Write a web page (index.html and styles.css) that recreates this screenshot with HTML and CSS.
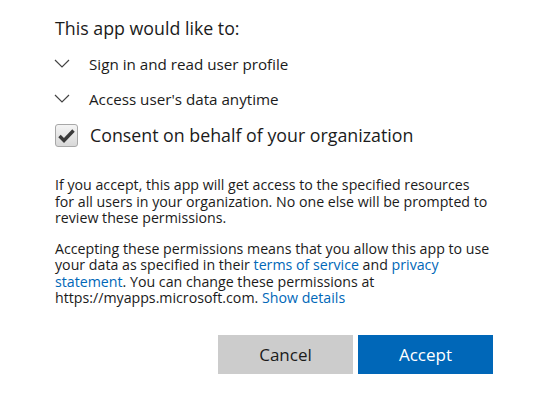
FILE: index.html
```html
<!DOCTYPE html>
<html lang="en">
<head>
  <meta charset="UTF-8" />
  <meta name="viewport" content="width=device-width, initial-scale=1.0"/>
  <title>Permissions requested</title>
  <link rel="stylesheet" href="styles.css">
</head>
<body>
  <div class="consent">
    <div class="title">This app would like to:</div>
    <ul class="scopes">
      <li class="scope">
        <svg class="chevron" width="16" height="9" viewBox="0 0 16 9"><polyline points="1,1 8,8 15,1" fill="none" stroke="#444" stroke-width="1.2"/></svg>
        <span>Sign in and read user profile</span>
      </li>
      <li class="scope">
        <svg class="chevron" width="16" height="9" viewBox="0 0 16 9"><polyline points="1,1 8,8 15,1" fill="none" stroke="#444" stroke-width="1.2"/></svg>
        <span>Access user's data anytime</span>
      </li>
    </ul>
    <label class="org-consent">
      <span class="checkbox">
        <svg width="17" height="15" viewBox="0 0 17 15"><path d="M1.5 8 L6 12.5 L15.5 2.5" fill="none" stroke="#3a3a3a" stroke-width="3.4" stroke-linejoin="miter"/></svg>
      </span>
      <span>Consent on behalf of your organization</span>
    </label>
    <p class="note">If you accept, this app will get access to the specified resources<br>for all users in your organization. No one else will be prompted to<br>review these permissions.</p>
    <p class="note">Accepting these permissions means that you allow this app to use<br>your data as specified in their <a href="#">terms of service</a> and <a href="#">privacy<br>statement</a>. You can change these permissions at<br>https://myapps.microsoft.com. <a href="#">Show details</a></p>
    <div class="buttons">
      <button class="btn cancel">Cancel</button>
      <button class="btn accept">Accept</button>
    </div>
  </div>
</body>
</html>
```

FILE: styles.css
```css
* {
  box-sizing: border-box;
}
body {
  margin: 0;
  background-color: #fff;
  font-family: "Open Sans", "Noto Sans", Arial, sans-serif;
  color: #1b1b1b;
}
.consent {
  width: 493px;
  padding: 16px 0 0 55px;
}
.title {
  font-size: 17.8px;
  line-height: 24px;
}
.scopes {
  list-style: none;
  margin: 6px 0 0;
  padding: 0;
}
.scope {
  display: flex;
  align-items: center;
  height: 35px;
  font-size: 15.2px;
}
.chevron {
  margin: 0 19px 0 -1px;
}
.org-consent {
  display: flex;
  align-items: center;
  margin-top: 7px;
  font-size: 17.8px;
}
.checkbox {
  width: 23px;
  height: 23px;
  margin-right: 12px;
  border: 1px solid #a8a8a8;
  border-radius: 3px;
  background: linear-gradient(#f4f4f4, #d8d8d8);
  display: flex;
  align-items: center;
  justify-content: center;
}
.note {
  margin: 30px -30px 0 0;
  font-size: 14.2px;
  line-height: 16.5px;
}
.note + .note {
  margin-top: 14px;
}
.note a {
  color: #0067b8;
  text-decoration: none;
}
.buttons {
  display: flex;
  justify-content: flex-end;
  gap: 5px;
  margin-top: 28px;
}
.btn {
  width: 135px;
  height: 39px;
  border: none;
  font-family: inherit;
  font-size: 17px;
  cursor: pointer;
}
.cancel {
  background-color: #cccccc;
  color: #1b1b1b;
}
.accept {
  background-color: #0067b8;
  color: #fff;
}
```
